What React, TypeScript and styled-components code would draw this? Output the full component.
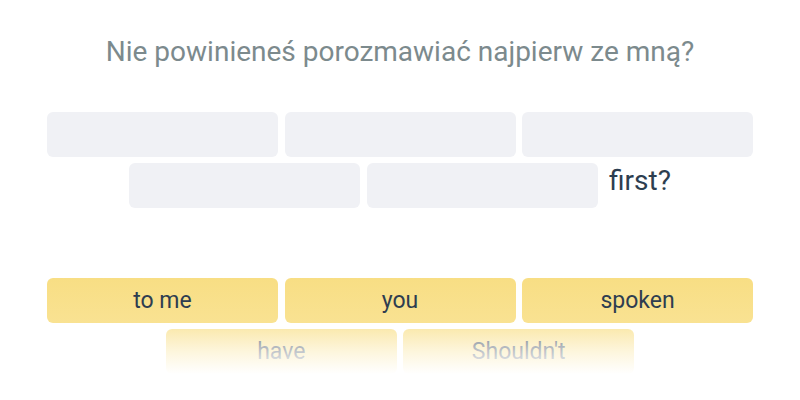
import React from 'react'
import styled, { createGlobalStyle } from 'styled-components'

// global reset for the exercise page
const GlobalStyle = createGlobalStyle`
  html, body {
    margin: 0;
    padding: 0;
    background: #ffffff;
    font-family: Roboto, "Noto Sans", "Liberation Sans", sans-serif;
  }
`

const Page = styled.div`
  width: 800px;
  height: 400px;
  overflow: hidden;
  display: flex;
  flex-direction: column;
  align-items: center;
  padding-top: 35px;
  box-sizing: border-box;
`

const Prompt = styled.h1`
  margin: 0;
  font-size: 28px;
  line-height: 34px;
  font-weight: 400;
  color: #7c8a8d;
  text-align: center;
`

const Answer = styled.div`
  width: 708px;
  margin-top: 43px;
  display: flex;
  flex-wrap: wrap;
  justify-content: center;
  align-items: flex-start;
  gap: 6px 6.5px;
`

const Slot = styled.div`
  width: 231px;
  height: 45px;
  border-radius: 6px;
  background: #f0f1f5;
`

const FixedWord = styled.span`
  margin-left: 5px;
  font-size: 28px;
  line-height: 36px;
  color: #2d3e50;
`

const Bank = styled.div`
  position: relative;
  width: 708px;
  margin-top: 70px;
  display: flex;
  flex-wrap: wrap;
  justify-content: center;
  gap: 6px 6.5px;
`

const Tile = styled.button`
  width: 231px;
  height: 45px;
  padding: 0;
  border: none;
  border-radius: 6px;
  background: linear-gradient(#f8de84, #f9e292);
  font-family: inherit;
  font-size: 23px;
  color: #2e3d50;
  cursor: pointer;
`

// white fade that hides the overflow row of the word bank
const Fade = styled.div`
  position: absolute;
  left: 0;
  right: 0;
  top: 51px;
  bottom: 0;
  pointer-events: none;
  background: linear-gradient(rgba(255, 255, 255, 0.35), rgba(255, 255, 255, 0.7) 50%, #ffffff 100%);
`

const words = ['to me', 'you', 'spoken', 'have', "Shouldn't"]

const App = () => {
  return (
    <>
      <GlobalStyle />
      <Page>
        <Prompt>Nie powinieneś porozmawiać najpierw ze mną?</Prompt>
        <Answer>
          <Slot />
          <Slot />
          <Slot />
          <Slot />
          <Slot />
          <FixedWord>first?</FixedWord>
        </Answer>
        <Bank>
          {words.map(w => (
            <Tile key={w}>{w}</Tile>
          ))}
          <Fade />
        </Bank>
      </Page>
    </>
  )
}

export default App
